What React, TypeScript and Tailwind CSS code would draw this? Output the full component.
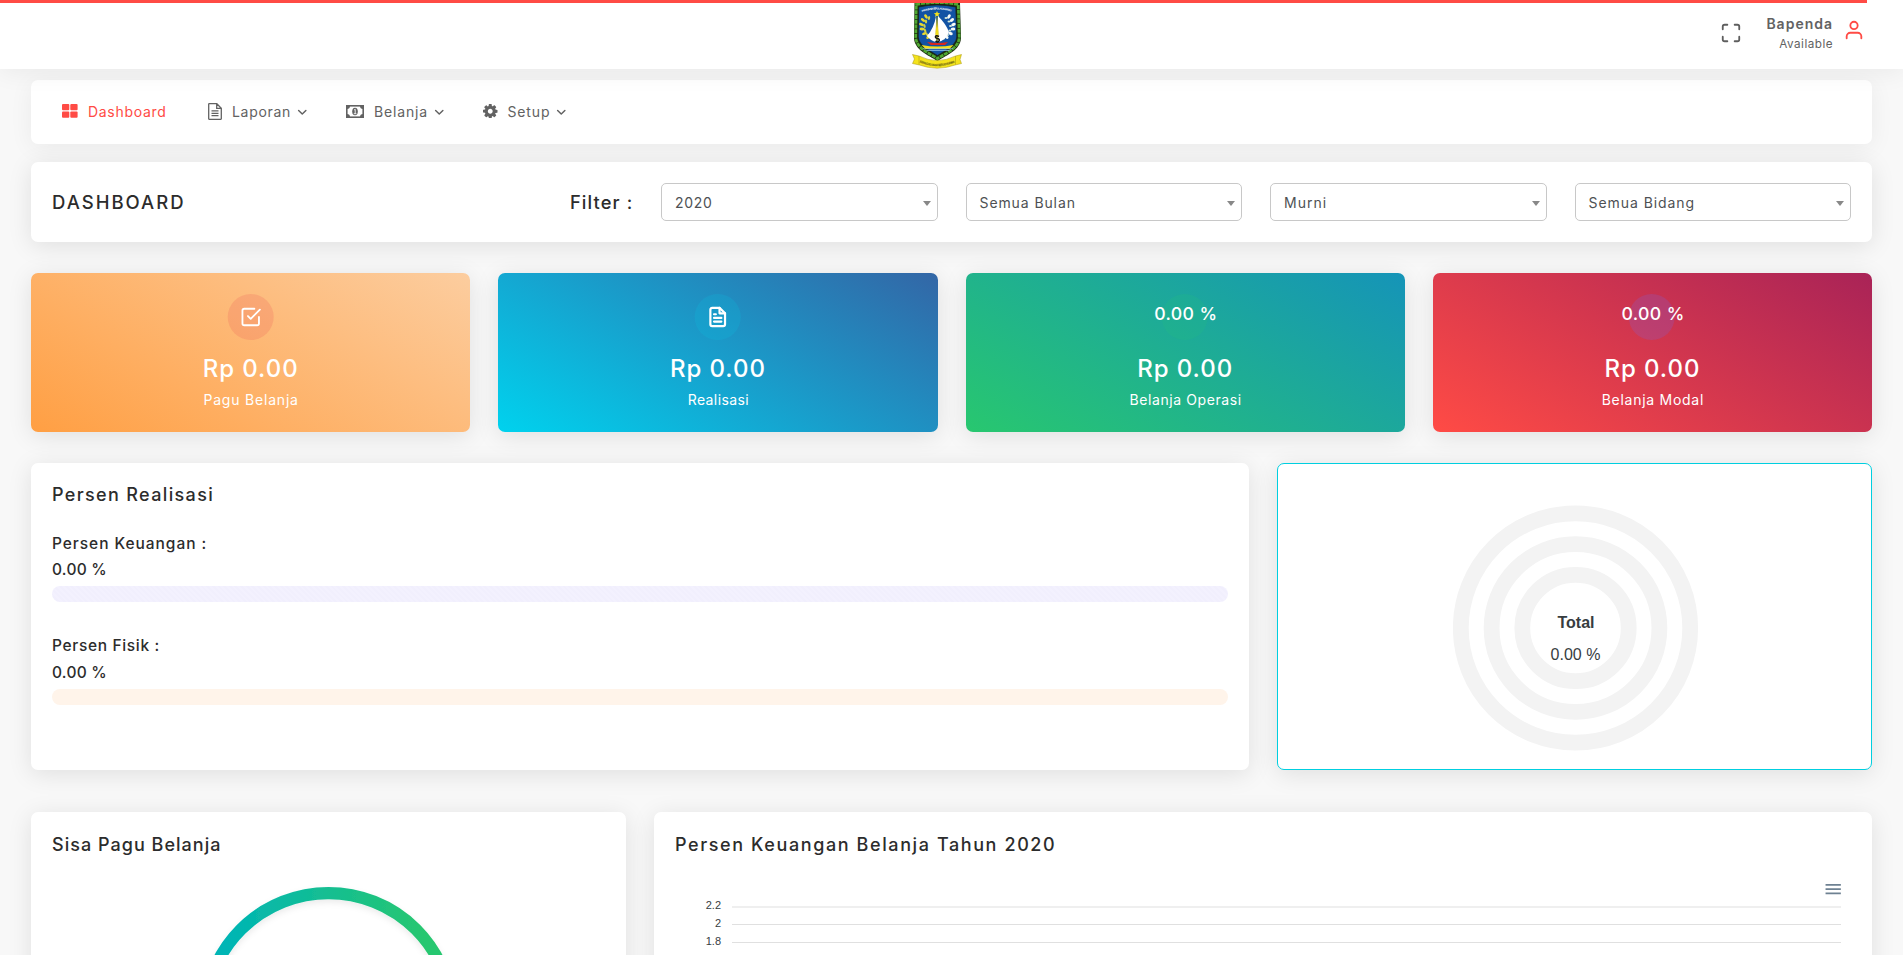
import React from "react";

const card = "rounded-[7px] bg-white shadow-[0_4px_25px_0_rgba(0,0,0,0.1)]";
const heading = "font-[450] text-[#2c2c2c]";

function Feather({ size, width = 2, className = "", children }: { size: number; width?: number; className?: string; children: React.ReactNode }) {
  return (
    <svg width={size} height={size} viewBox="0 0 24 24" fill="none" stroke="currentColor" strokeWidth={width} strokeLinecap="round" strokeLinejoin="round" className={`shrink-0 ${className}`}>
      {children}
    </svg>
  );
}

const Chevron = () => (
  <Feather size={14.5} width={2.4} className="ml-[4px] mt-[3px]">
    <path d="M6 9l6 6 6-6" />
  </Feather>
);

function Crest() {
  const wreath = [
    [28, 56], [20, 49], [15, 40], [14, 31], [17, 22], [23, 15],
  ];
  return (
    <svg width="50" height="67" viewBox="0 0 100 134">
      <path d="M5 2 Q50 -6 96 2 L98 72 C97 96 70 106 51 118 C32 106 5 96 4 72 Z" fill="#1c2a12" />
      <path d="M8.500 5 Q50 -3 92.500 5 L94.500 71 C93 93 68 102 51 113 C34 102 9 93 7.500 71 Z" fill="none" stroke="#4fa832" strokeWidth="5.500" strokeDasharray="8 1.500" />
      <path d="M13.500 10 Q50 2 87.500 10 L89.500 70 C88 88 66 97 51 107 C36 97 14 88 12.500 70 Z" fill="#1253a4" stroke="#16200f" strokeWidth="1.200" />
      <path id="crest-arc" d="M20 20 Q50 10 82 20" fill="none" />
      <text fontSize="5.500" fontWeight="700" fill="#fff" fontFamily="Liberation Sans, sans-serif">
        <textPath href="#crest-arc" textLength="60">PROVINSI KEPULAUAN RIAU</textPath>
      </text>
      {wreath.map(([x, y], i) => (
        <g key={i}>
          <ellipse cx={x + 5} cy={y + 14} rx="5" ry="2.800" fill="#e9d92c" transform={`rotate(${-35 + i * 18} ${x + 5} ${y + 14})`} />
          <ellipse cx={x + 11} cy={y + 17} rx="4.200" ry="2.300" fill="#cfd04a" transform={`rotate(${40 + i * 12} ${x + 11} ${y + 17})`} />
          <ellipse cx={97 - x} cy={y + 14} rx="4.600" ry="3" fill="#f6faf6" transform={`rotate(${35 - i * 18} ${97 - x} ${y + 14})`} />
          <ellipse cx={91 - x} cy={y + 17} rx="3" ry="2" fill="#d5ead8" />
        </g>
      ))}
      <path d="M50 18l1.800 4.200 4.400.3-3.400 2.900 1.100 4.400L50 27.300l-3.900 2.500 1.100-4.400-3.400-2.900 4.400-.3z" fill="#f2df1f" />
      <path d="M48 29 Q44 52 30 68 Q38 78 48 80 Z" fill="#fff" />
      <path d="M52 28 Q68 44 74 60 Q66 78 52 80 Z" fill="#fff" />
      <path d="M50 30l3 34-3 16-3-16z" fill="#f2df1f" stroke="#c9ae13" strokeWidth=".7" />
      <path d="M54 69q-6-3-7 0t4 4 3 5-7 0" fill="none" stroke="#111" strokeWidth="3" />
      <path d="M30 80q22 4 42 0l-6 6H38z" fill="#d9271c" />
      <path d="M19 86q32 6 64 0l-8 8H27z" fill="#f2df1f" />
      <path d="M22 93.500h60M29 97h46" stroke="#8fc7ef" strokeWidth="1.500" />
      <path d="M1 105 L14 108 Q50 126 87 108 L99 105 L96 115 L99 123 L86 126 Q50 139 15 126 L1 123 L5 114 Z" fill="#f4e31d" stroke="#a59310" strokeWidth="1" />
      <path d="M14 108v17M87 108v17" stroke="#a59310" />
      <path id="crest-ribbon" d="M15 121 Q50 136 86 121" fill="none" />
      <text fontSize="7" fontWeight="700" fill="#3a3510" fontFamily="Liberation Sans, sans-serif">
        <textPath href="#crest-ribbon" textLength="72" lengthAdjust="spacingAndGlyphs">BERPANCANG AMANAH BERSAUH MARWAH</textPath>
      </text>
    </svg>
  );
}

function Header() {
  return (
    <header className="relative z-10 flex h-[69px] shrink-0 bg-white shadow-[0_4px_25px_0_rgba(0,0,0,0.06)]">
      <div className="absolute left-0 top-0 h-[3px] w-[1867px] bg-[#ff4b45]" />
      <div className="w-[912px] shrink-0" />
      <div className="pt-[2px]"><Crest /></div>
      <div className="flex flex-1 justify-end pr-[38px]">
        <Feather size={22} className="mt-[22px] text-[#5e5e5e]">
          <path d="M8 3H5a2 2 0 0 0-2 2v3m18 0V5a2 2 0 0 0-2-2h-3m0 18h3a2 2 0 0 0 2-2v-3M3 16v3a2 2 0 0 0 2 2h3" />
        </Feather>
        <div className="ml-[24px] flex w-[66px] flex-col items-end whitespace-nowrap pt-[14px] text-[#626262]">
          <span className="-mr-px text-[14px] font-semibold leading-[20px] tracking-[1px]">Bapenda</span>
          <span className="-mr-px pt-px text-[11.7px] leading-[19px] tracking-[0.48px]">Available</span>
        </div>
        <Feather size={22} className="ml-[11px] mt-[19px] text-[#ff4b45]">
          <path d="M20 21v-2a4 4 0 0 0-4-4H8a4 4 0 0 0-4 4v2" />
          <circle cx="12" cy="7" r="4" />
        </Feather>
      </div>
    </header>
  );
}

function Nav() {
  return (
    <nav className="flex h-[64px] items-center rounded-[7px] bg-white pb-[2px] pl-[31px] text-[14px] text-[#626262] shadow-[0_4px_25px_0_rgba(0,0,0,0.06)]">
      <div className="flex w-[146px] items-center text-[#ff4b45]">
        <svg width="16" height="14" viewBox="0 0 16 14" fill="currentColor" className="mr-[10px]">
          <rect width="7.300" height="6.300" rx="1" /><rect x="8.300" width="7.300" height="6.300" rx="1" />
          <rect y="7.400" width="7.300" height="6.300" rx="1" /><rect x="8.300" y="7.400" width="7.300" height="6.300" rx="1" />
        </svg>
        <span className="tracking-[0.7px]">Dashboard</span>
      </div>
      <div className="flex w-[138px] items-center">
        <svg width="14" height="17" viewBox="0 0 14 17" fill="none" stroke="currentColor" strokeWidth="1.300" className="mr-[10px]">
          <path d="M.7 1.200a.5.5 0 0 1 .5-.5h7.600l4.500 4.500v10.600a.5.5 0 0 1-.5.5H1.200a.5.5 0 0 1-.5-.5zM8.700.7v4.600h4.600M3.500 7.900h7M3.500 10.300h7M3.500 12.700h7" />
        </svg>
        <span className="tracking-[0.7px]">Laporan</span>
        <Chevron />
      </div>
      <div className="flex w-[137px] items-center">
        <svg width="18" height="13" viewBox="0 0 18 13" fill="none" stroke="currentColor" className="mr-[10px]">
          <rect x=".8" y=".8" width="16.400" height="11.400" strokeWidth="1.600" />
          <path d="M1 4A3 3 0 0 0 4 1H1zM17 4A3 3 0 0 1 14 1H17zM1 9A3 3 0 0 1 4 12H1zM17 9A3 3 0 0 0 14 12H17z" fill="currentColor" stroke="none" />
          <ellipse cx="9" cy="6.500" rx="2.800" ry="3.800" fill="currentColor" stroke="none" />
          <path d="M8.200 5l1-.8v4.300M7.800 8.700h2.600" stroke="#fff" strokeWidth=".9" />
        </svg>
        <span className="tracking-[0.85px]">Belanja</span>
        <Chevron />
      </div>
      <div className="flex items-center">
        <svg width="14.500" height="14.500" viewBox="0 -128 1536 1536" fill="currentColor" fillRule="evenodd" className="mr-[10px]">
          <path d="M1024 640q0 106-75 181t-181 75-181-75-75-181 75-181 181-75 181 75 75 181zM1536 531v222q0 12-8 23t-20 13l-185 28q-19 54-39 91 35 50 107 138 10 12 10 25t-9 23q-27 37-99 108t-94 71q-12 0-26-9l-138-108q-44 23-91 38-16 136-29 186-7 28-36 28h-222q-14 0-24.500-8.500t-11.500-21.500l-28-184q-49-16-90-37l-141 107q-10 9-25 9-14 0-25-11-126-114-165-168-7-10-7-23 0-12 8-23 15-21 51-66.500t54-70.500q-27-50-41-99l-183-27q-13-2-21-12.500t-8-23.500v-222q0-12 8-23t19-13l186-28q14-46 39-92-40-57-107-138-10-12-10-24 0-10 9-23 26-36 98.500-107.500t94.500-71.500q13 0 26 10l138 107q44-23 91-38 16-136 29-186 7-28 36-28h222q14 0 24.500 8.500t11.500 21.500l28 184q49 16 90 37l142-107q9-9 24-9 13 0 25 10 129 119 165 170 7 8 7 22 0 12-8 23-15 21-51 66.500t-54 70.500q26 50 41 98l183 28q13 2 21 12.500t8 23.500z" />
        </svg>
        <span className="tracking-[0.85px]">Setup</span>
        <Chevron />
      </div>
    </nav>
  );
}

function Select({ label, tracking }: { label: string; tracking: string }) {
  return (
    <div className="flex h-[38px] items-center justify-between rounded-[5px] border border-[#c8c8c8] pl-[13px] pr-[6px] pt-[2px]">
      <span className={`text-[14px] leading-[20px] text-[#4e5154] ${tracking}`}>{label}</span>
      <svg width="8" height="5" viewBox="0 0 8 5" fill="#888"><path d="M0 0h8L4 5z" /></svg>
    </div>
  );
}

function FilterBar() {
  return (
    <section className={`${card} mt-[18px] flex h-[80px] items-center px-[21px]`}>
      <h4 className={`${heading} w-[518px] pt-[2px] text-[18.5px] tracking-[2px]`}>DASHBOARD</h4>
      <h4 className={`${heading} w-[91px] pt-px text-[18.3px] tracking-[1.1px]`}>Filter :</h4>
      <div className="grid flex-1 grid-cols-4 gap-[28px]">
        <Select label="2020" tracking="tracking-[0.66px]" />
        <Select label="Semua Bulan" tracking="tracking-[0.9px]" />
        <Select label="Murni" tracking="tracking-[1px]" />
        <Select label="Semua Bidang" tracking="tracking-[0.94px]" />
      </div>
    </section>
  );
}

const stats = [
  {
    label: "Pagu Belanja", tracking: "tracking-[0.8px]", bg: "bg-[linear-gradient(30deg,#ff9f43,#fccd9f)]", dot: "bg-[#ea5455]/20",
    top: <Feather size={22}><path d="M9 11l3 3L22 4" /><path d="M21 12v7a2 2 0 0 1-2 2H5a2 2 0 0 1-2-2V5a2 2 0 0 1 2-2h11" /></Feather>,
  },
  {
    label: "Realisasi", tracking: "tracking-[0.4px]", bg: "bg-[linear-gradient(30deg,#00d2ee,#3366a6)]", dot: "bg-[#00cfe8]/15",
    top: <Feather size={22} width={2.4}><path d="M14 2H6a2 2 0 0 0-2 2v16a2 2 0 0 0 2 2h12a2 2 0 0 0 2-2V8z" /><path d="M14 2v6h6M16 13H8M16 17H8M10 9H8" /></Feather>,
  },
  {
    label: "Belanja Operasi", tracking: "tracking-[0.58px]", bg: "bg-[linear-gradient(30deg,#28c76f,#1594b8)]", dot: "bg-[#28c76f]/15",
    top: <span className="-mt-[6px] whitespace-nowrap pl-[2px] text-[17.7px] font-[450] tracking-[0.4px]">0.00 %</span>,
  },
  {
    label: "Belanja Modal", tracking: "tracking-[0.72px]", bg: "bg-[linear-gradient(30deg,#ff4b45,#a92357)]", dot: "bg-[#7367f0]/20",
    top: <span className="-mt-[6px] whitespace-nowrap pl-[2px] text-[17.7px] font-[450] tracking-[0.4px]">0.00 %</span>,
  },
];

function Stats() {
  return (
    <section className="mt-[31px] grid grid-cols-4 gap-[28px]">
      {stats.map((s) => (
        <div key={s.label} className={`flex h-[159px] flex-col items-center rounded-[7px] pt-[21px] text-white shadow-[0_4px_25px_0_rgba(0,0,0,0.1)] ${s.bg}`}>
          <div className={`flex h-[46px] w-[46px] -translate-x-[0.3px] items-center justify-center rounded-full ${s.dot}`}>{s.top}</div>
          <h2 className="mt-[14px] text-[24px] font-[450] leading-[30px] tracking-[0.95px]">Rp 0.00</h2>
          <p className={`mt-[5px] pl-px text-[14px] leading-[21px] ${s.tracking}`}>{s.label}</p>
        </div>
      ))}
    </section>
  );
}

function Realisasi() {
  return (
    <section className="mt-[31px] grid grid-cols-[1218px_595px] gap-[28px]">
      <div className={`${card} h-[307px] px-[21px] pt-[20px]`}>
        <h4 className={`${heading} text-[18px] leading-[24px] tracking-[1.35px]`}>Persen Realisasi</h4>
        <h5 className={`${heading} mt-[26px] text-[15.5px] leading-[22px] tracking-[0.95px]`}>Persen Keuangan :</h5>
        <h5 className={`${heading} mt-[4px] text-[15.5px] leading-[22px] tracking-[0.26px]`}>0.00 %</h5>
        <div className="mt-[5px] h-[16px] rounded-full bg-[repeating-linear-gradient(45deg,#f1effd_0_2px,#f3f1fe_2px_4px)]" />
        <h5 className={`${heading} mt-[33px] text-[15.5px] leading-[22px] tracking-[0.66px]`}>Persen Fisik :</h5>
        <h5 className={`${heading} mt-[5px] text-[15.5px] leading-[22px] tracking-[0.26px]`}>0.00 %</h5>
        <div className="mt-[5px] h-[16px] rounded-full bg-[#fff4ea]" />
      </div>
      <div className={`${card} flex h-[307px] justify-center border border-[#00cfe0] pt-[41px]`}>
        <svg width="246" height="246" viewBox="0 0 246 246" className="ml-[3px]" fill="none" stroke="#f3f3f3" strokeWidth="15.800">
          <circle cx="122.500" cy="123" r="114.700" />
          <circle cx="122.500" cy="123" r="83.900" />
          <circle cx="122.500" cy="123" r="53.200" />
          <g fill="#373d3f" stroke="none" textAnchor="middle" fontSize="16" fontFamily="Liberation Sans, Arial, sans-serif">
            <text x="123" y="123" fontWeight="700">Total</text>
            <text x="122.500" y="155">0.00 %</text>
          </g>
        </svg>
      </div>
    </section>
  );
}

const ticks = ["2.2", "2", "1.8", "1.6"];

function Charts() {
  return (
    <section className="mt-[42px] grid grid-cols-[595px_1218px] gap-[28px]">
      <div className={`${card} h-[460px] px-[21px] pt-[21px]`}>
        <h4 className={`${heading} text-[18px] leading-[24px] tracking-[1.02px]`}>Sisa Pagu Belanja</h4>
        <div className="mt-[22px] flex justify-center">
          <svg width="276" height="280" viewBox="0 0 276 280" className="overflow-visible">
            <defs>
              <linearGradient id="gauge" x1="0" x2="1" y1="0" y2="0">
                <stop offset="0" stopColor="#00b5b5" />
                <stop offset=".08" stopColor="#00b5b5" />
                <stop offset=".9" stopColor="#28c76f" />
              </linearGradient>
              <filter id="gauge-shadow" x="-10%" y="-10%" width="120%" height="120%">
                <feDropShadow dx="0" dy="3" stdDeviation="3" floodColor="#000" floodOpacity=".08" />
              </filter>
            </defs>
            <circle cx="137.500" cy="137.700" r="123.600" fill="none" stroke="url(#gauge)" strokeWidth="12.200" filter="url(#gauge-shadow)" />
          </svg>
        </div>
      </div>
      <div className={`${card} h-[460px] px-[21px] pt-[21px]`}>
        <h4 className={`${heading} text-[18px] leading-[24px] tracking-[1.6px]`}>Persen Keuangan Belanja Tahun 2020</h4>
        <div className="mt-[22px] flex h-[20px] justify-end pr-[8px]">
          <svg width="20.400" height="20.400" viewBox="0 0 24 24" fill="#6e8192"><path d="M3 18h18v-2H3v2zm0-5h18v-2H3v2zm0-7v2h18V6H3z" /></svg>
        </div>
        <svg width="1170" height="120" viewBox="675 899 1170 120" className="block">
          <rect x="732" y="906" width="1109" height="2" fill="#efefef" />
          {[924, 942, 960, 978].map((y) => <rect key={y} x="732" y={y} width="1109" height="1" fill="#e0e0e0" />)}
          {ticks.map((t, i) => (
            <text key={t} x="721" y={909 + i * 18} textAnchor="end" fontSize="11" fill="#373d3f" fontFamily="Liberation Sans, Arial, sans-serif">{t}</text>
          ))}
        </svg>
      </div>
    </section>
  );
}

export default function App() {
  return (
    <div className="flex h-screen flex-col overflow-hidden bg-[#f8f8f8] font-['Inter',sans-serif]">
      <Header />
      <main className="mx-[31px] mt-[11px] shrink-0">
        <Nav />
        <FilterBar />
        <Stats />
        <Realisasi />
        <Charts />
      </main>
    </div>
  );
}
